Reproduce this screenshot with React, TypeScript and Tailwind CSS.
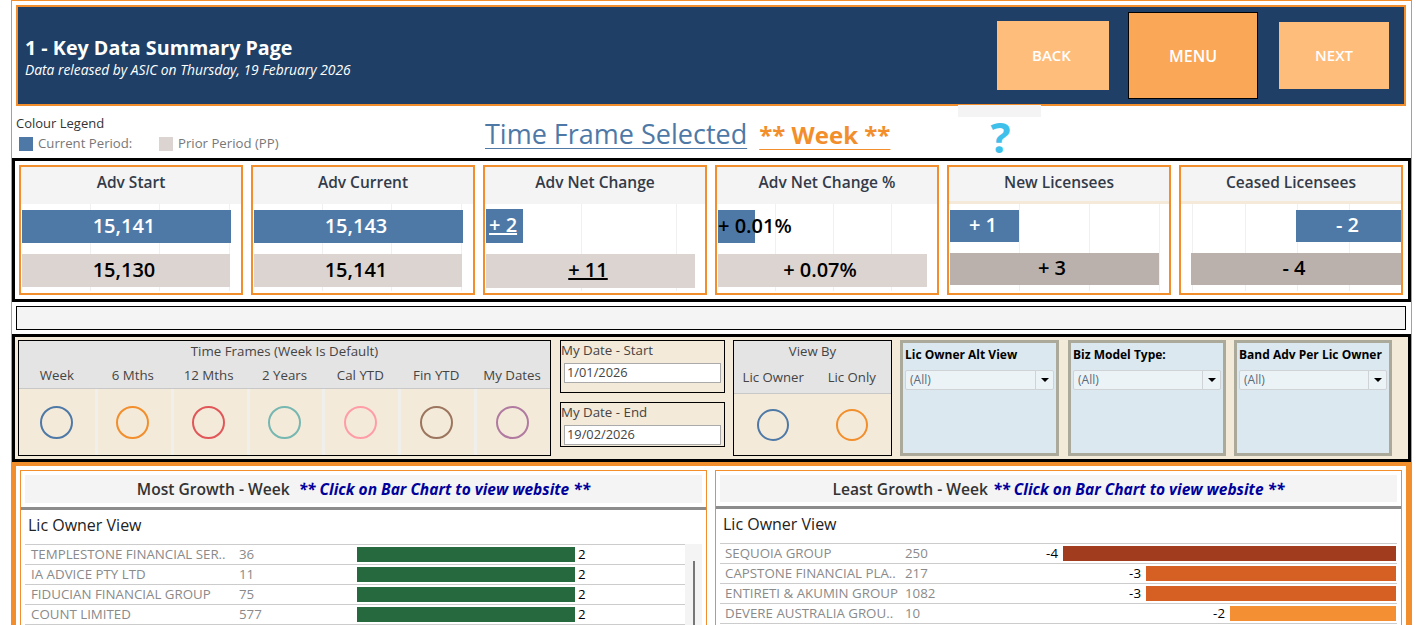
const kpis = [
  { t: 'Adv Start', grid: ['left-[69px]', 'left-[138px]', 'left-[208px]'], a: { box: 'ml-[1px] w-[209px] h-[33px] justify-center pr-[5px]', bg: 'bg-[#4e79a7] text-white', v: '15,141' }, b: { box: 'ml-[1px] w-[208px] h-[33px] justify-center pr-[4px]', bg: 'bg-[#dcd4d1] text-black', v: '15,130' } },
  { t: 'Adv Current', grid: ['left-[69px]', 'left-[138px]', 'left-[208px]'], a: { box: 'ml-[1px] w-[209px] h-[33px] justify-center pr-[5px]', bg: 'bg-[#4e79a7] text-white', v: '15,143' }, b: { box: 'ml-[1px] w-[208px] h-[33px] justify-center pr-[4px]', bg: 'bg-[#dcd4d1] text-black', v: '15,141' } },
  { t: 'Adv Net Change', grid: ['left-[96px]', 'left-[191px]'], a: { box: 'ml-[1px] w-[37px] h-[34px] -mt-px pl-[3px]', bg: 'bg-[#4e79a7] text-white underline', v: '+ 2' }, b: { box: 'ml-[1px] w-[209px] h-[34px] justify-center pr-[5px]', bg: 'bg-[#dcd4d1] text-black underline', v: '+ 11' } },
  { t: 'Adv Net Change %', grid: ['left-[58px]', 'left-[116px]', 'left-[174px]'], a: { box: 'ml-[1px] w-[37px] h-[33px] whitespace-nowrap', bg: 'bg-[#4e79a7] text-black', v: '+ 0.01%' }, b: { box: 'ml-[1px] w-[209px] h-[33px] justify-center pr-[5px]', bg: 'bg-[#dcd4d1] text-black', v: '+ 0.07%' } },
  { t: 'New Licensees', strip: true, grid: ['left-[70px]', 'left-[140px]', 'left-[210px]'], a: { box: 'ml-[1px] w-[69px] h-[32px] justify-center pr-[3px]', bg: 'bg-[#4e79a7] text-white', v: '+ 1' }, b: { box: 'ml-[1px] w-[209px] h-[32px] justify-center pr-[5px]', bg: 'bg-[#bab0ac] text-black', v: '+ 3' } },
  { t: 'Ceased Licensees', strip: true, grid: ['left-[11px]', 'left-[64px]', 'left-[116px]', 'left-[168px]'], a: { box: 'ml-[115px] w-[105px] h-[32px] justify-center pr-[2px]', bg: 'bg-[#4e79a7] text-white', v: '- 2' }, b: { box: 'ml-[10px] w-[210px] h-[32px] justify-center pr-[4px]', bg: 'bg-[#bab0ac] text-black', v: '- 4' } },
];

const frames = [
  { l: 'Week', c: 'border-[#4e79a7]' },
  { l: '6 Mths', c: 'border-[#f28e2b]' },
  { l: '12 Mths', c: 'border-[#e15759]' },
  { l: '2 Years', c: 'border-[#76b7b2]' },
  { l: 'Cal YTD', c: 'border-[#ff9da7]' },
  { l: 'Fin YTD', c: 'border-[#9c755f]' },
  { l: 'My Dates', c: 'border-[#b07aa1]' },
];

const most = [
  ['TEMPLESTONE FINANCIAL SER..', '36'],
  ['IA ADVICE PTY LTD', '11'],
  ['FIDUCIAN FINANCIAL GROUP', '75'],
  ['COUNT LIMITED', '577'],
];

const least = [
  { n: 'SEQUOIA GROUP', v: '250', d: '-4', bar: 'w-[333px] bg-[#a23c1f]' },
  { n: 'CAPSTONE FINANCIAL PLA..', v: '217', d: '-3', bar: 'w-[250px] bg-[#d65f24]' },
  { n: 'ENTIRETI & AKUMIN GROUP', v: '1082', d: '-3', bar: 'w-[250px] bg-[#d65f24]' },
  { n: 'DEVERE AUSTRALIA GROU..', v: '10', d: '-2', bar: 'w-[166px] bg-[#f58f33]' },
];

function Kpi({ k }: { k: (typeof kpis)[number] }) {
  return (
    <div className="w-[224px] h-[130px] border-2 border-[#f28e2b] flex flex-col">
      <div className={`h-[37px] shrink-0 bg-[#f4f4f4] flex items-center justify-center text-[15.5px] font-semibold text-[#333b49] ${k.strip ? 'border-b-[3px] border-[#f5ead9] pb-[3px]' : 'pb-[6px]'}`}>
        {k.t}
      </div>
      <div className="relative flex-1 flex flex-col pt-[6px]">
        {k.grid.map((g) => (
          <div key={g} className={`absolute top-0 bottom-[2px] w-px bg-[#f0f0f0] ${g}`} />
        ))}
        <div className={`relative flex items-center pb-[2px] text-[20px] font-semibold ${k.a.box} ${k.a.bg}`}>{k.a.v}</div>
        <div className={`relative mt-[11px] flex items-center pb-[2px] text-[20px] font-semibold ${k.b.box} ${k.b.bg}`}>{k.b.v}</div>
      </div>
    </div>
  );
}

function Select({ title, w }: { title: string; w: string }) {
  return (
    <div className={`${w} h-[116px] border-[3px] border-[#aba99a] bg-[#dce8ef] px-[2px] pt-[4px]`}>
      <div className="text-[12px] font-bold text-black leading-[16px] whitespace-nowrap">{title}</div>
      <div className="mt-[7px] h-[20px] flex items-center bg-[#ecf3f6] border border-[#cfd3d6] rounded-[2px] text-[#5a6a7a] text-[12px]">
        <span className="flex-1 pl-[4px]">(All)</span>
        <span className="w-[18px] h-full border-l border-[#cfd3d6] flex items-center justify-center">
          <span className="w-0 h-0 border-x-[4px] border-t-[4px] border-x-transparent border-t-black" />
        </span>
      </div>
    </div>
  );
}

function DateBox({ label, value, cls }: { label: string; value: string; cls: string }) {
  return (
    <div className={`border border-black bg-[#f4ead9] ${cls}`}>
      <div className="text-[13.3px] leading-[19px] text-[#444]">{label}</div>
      <div className="mx-[3px] mt-[3px] h-[20px] bg-white border border-[#aaa] flex items-center pl-[2px] text-[12.8px] text-[#444]">{value}</div>
    </div>
  );
}

export default function App() {
  return (
    <div className="w-[1416px] h-[625px] overflow-hidden bg-white font-['Open_Sans',sans-serif]">
      <div className="ml-[11px] w-[1401px] h-[640px] border-x border-t border-[#f28e2b] pt-[4px]">
        {/* Header */}
        <div className="ml-[4px] w-[1390px] h-[101px] border-2 border-[#f28e2b] bg-[#1f3f66] flex items-center pl-[7px] pr-[15px]">
          <div className="flex-1 mt-[2px]">
            <div className="text-[19.7px] leading-[26px] font-bold text-white">1 - Key Data Summary Page</div>
            <div className="text-[13.8px] leading-[18px] italic text-white">Data released by ASIC on Thursday, 19 February 2026</div>
          </div>
          <div className="w-[112px] h-[69px] bg-[#ffbd7c] flex items-center justify-center text-white text-[15px] font-semibold pr-[3px]">BACK</div>
          <div className="ml-[19px] w-[130px] h-[87px] bg-[#faa857] border border-black flex items-center justify-center text-white text-[16px] font-semibold">MENU</div>
          <div className="ml-[21px] w-[110px] h-[67px] bg-[#ffbd7c] flex items-center justify-center text-white text-[15px] font-semibold">NEXT</div>
        </div>

        {/* Legend and title */}
        <div className="h-[52px] flex pl-[4px]">
          <div className="w-[469px] pt-[9px]">
            <div className="text-[13px] leading-[17px] text-[#333]">Colour Legend</div>
            <div className="mt-[2px] ml-[3px] flex items-center text-[13.2px] text-[#777]">
              <span className="w-[14px] h-[14px] bg-[#4e79a7]" />
              <span className="ml-[5px] w-[121px]">Current Period:</span>
              <span className="w-[14px] h-[14px] bg-[#dcd4d1]" />
              <span className="ml-[5px]">Prior Period (PP)</span>
            </div>
          </div>
          <div className="w-[473px] pt-[11px] leading-[34px] whitespace-nowrap flex items-baseline">
            <span className="text-[27px] font-medium text-[#4e79a7] underline decoration-1 underline-offset-[4px]">Time Frame Selected</span>
            <span className="ml-[12px] text-[24px] font-bold text-[#f28e2b] underline decoration-1 underline-offset-[5px]">** Week **</span>
          </div>
          <div className="w-[83px] -mt-px flex flex-col items-center">
            <div className="w-full h-[12px] bg-[#f4f4f4] shrink-0" />
            <div className="text-[#3fc0ea] text-[42px] leading-[40px] font-bold ml-[2px]">?</div>
          </div>
        </div>

        {/* KPI row */}
        <div className="h-[144px] border-[3px] border-black flex gap-[8px] p-[4px]">
          {kpis.map((k) => (
            <Kpi key={k.t} k={k} />
          ))}
        </div>

        <div className="mt-[4px] ml-[4px] w-[1390px] h-[24px] border border-black bg-[#f4f4f4]" />

        {/* Filters */}
        <div className="mt-[4px] h-[128px] border-[3px] border-black bg-[#f4ead9] flex pl-[3px] pt-[3px]">
          <div className="w-[533px] h-[116px] border border-black flex flex-col">
            <div className="h-[48px] bg-[#e4e4e4] border-b border-[#c8c8c8] text-[#444] text-[13.3px]">
              <div className="text-center leading-[20px]">Time Frames (Week Is Default)</div>
              <div className="grid grid-cols-7 leading-[26px] mt-[1px]">
                {frames.map((f) => (
                  <div key={f.l} className="text-center">{f.l}</div>
                ))}
              </div>
            </div>
            <div className="flex-1 grid grid-cols-7">
              {frames.map((f) => (
                <div key={f.l} className="flex items-center justify-center shadow-[inset_3px_0_0_#f1efeb] first:shadow-none">
                  <span className={`w-[33px] h-[33px] rounded-full border-2 ${f.c}`} />
                </div>
              ))}
            </div>
          </div>

          <div className="ml-[9px] w-[165px] flex flex-col gap-[9px]">
            <DateBox label="My Date - Start" value="1/01/2026" cls="h-[53px]" />
            <DateBox label="My Date - End" value="19/02/2026" cls="h-[45px]" />
          </div>

          <div className="ml-[8px] w-[159px] h-[116px] border border-black flex flex-col">
            <div className="h-[53px] bg-[#e4e4e4] border-b border-[#c8c8c8] text-[#444] text-[13.2px]">
              <div className="text-center leading-[20px]">View By</div>
              <div className="grid grid-cols-2 leading-[30px] mt-[1px]">
                <div className="text-center">Lic Owner</div>
                <div className="text-center">Lic Only</div>
              </div>
            </div>
            <div className="flex-1 grid grid-cols-2">
              <div className="flex items-center justify-center">
                <span className="w-[32px] h-[32px] rounded-full border-2 border-[#4e79a7]" />
              </div>
              <div className="flex items-center justify-center">
                <span className="w-[32px] h-[32px] rounded-full border-2 border-[#f28e2b]" />
              </div>
            </div>
          </div>

          <div className="ml-[8px]"><Select title="Lic Owner Alt View" w="w-[159px]" /></div>
          <div className="ml-[9px]"><Select title="Biz Model Type:" w="w-[158px]" /></div>
          <div className="ml-[8px]"><Select title="Band Adv Per Lic Owner" w="w-[158px]" /></div>
        </div>

        {/* Bottom charts */}
        <div className="-ml-px w-[1400px] h-[170px] border-x-[5px] border-t-[4px] border-[#f28e2b] flex gap-[8px] px-[4px] pt-[4px]">
          <div className="w-[687px] border border-[#f28e2b]">
            <div className="mx-[4px] mt-[4px] h-[28px] pt-[2px] bg-[#f4f4f4] flex items-center justify-center text-[15.6px] font-semibold text-[#333]">
              Most Growth - Week
              <span className="ml-[9px] italic font-bold text-[15.5px] text-[#00009c]">** Click on Bar Chart to view website **</span>
            </div>
            <div className="mt-[4px] h-[3px] bg-[#8c8c8c]" />
            <div className="pl-[7px] mt-[3px] h-[31px] text-[16px] leading-[24px] text-[#222]">Lic Owner View</div>
            <div className="flex px-[4px]">
              <div className="flex-1">
                {most.map((r) => (
                  <div key={r[0]} className="h-[20px] border-t border-[#cccccc] flex items-center text-[13.3px] text-[#8a8a8a]">
                    <span className="pl-[6px] w-[214px] whitespace-nowrap">{r[0]}</span>
                    <span className="w-[118px]">{r[1]}</span>
                    <span className="w-[218px] h-[15px] bg-[#26693f]" />
                    <span className="ml-[3px] text-black">2</span>
                  </div>
                ))}
                <div className="border-t border-[#cccccc]" />
              </div>
              <div className="w-[17px] bg-[#f4f4f4] h-[90px] flex justify-center pt-[17px]">
                <div className="w-[2px] h-full bg-[#777]" />
              </div>
            </div>
          </div>

          <div className="w-[687px] border border-[#f28e2b]">
            <div className="mx-[4px] mt-[4px] h-[27px] pt-[2px] bg-[#f4f4f4] flex items-center justify-center text-[15.6px] font-semibold text-[#333]">
              Least Growth - Week
              <span className="ml-[5px] italic font-bold text-[15.5px] text-[#00009c]">** Click on Bar Chart to view website **</span>
            </div>
            <div className="mt-[4px] h-[3px] bg-[#8c8c8c]" />
            <div className="pl-[7px] mt-[3px] h-[31px] text-[16px] leading-[24px] text-[#222]">Lic Owner View</div>
            <div className="px-[4px]">
              {least.map((r) => (
                <div key={r.n} className="h-[20px] border-t border-[#cccccc] flex items-center text-[13.3px] text-[#8a8a8a]">
                  <span className="pl-[5px] w-[185px] whitespace-nowrap">{r.n}</span>
                  <span>{r.v}</span>
                  <span className="flex-1 flex items-center justify-end pr-[1px]">
                    <span className="mr-[5px] text-black">{r.d}</span>
                    <span className={`h-[15px] ${r.bar}`} />
                  </span>
                </div>
              ))}
              <div className="border-t border-[#cccccc]" />
            </div>
          </div>
        </div>
      </div>
    </div>
  );
}
